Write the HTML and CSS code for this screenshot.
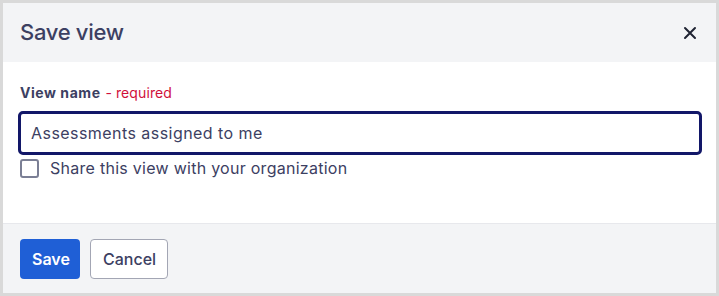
FILE: index.html
```html
<!DOCTYPE html>
<html>
<head>
<meta charset="utf-8">
<link rel="stylesheet" href="styles.css">
</head>
<body>
<div class="modal">
  <div class="modal-header">
    <h2 class="modal-title">Save view</h2>
    <button class="close-btn" aria-label="Close">
      <svg width="14" height="14" viewBox="0 0 14 14"><path d="M2 2 L12 12 M12 2 L2 12" stroke="#1f2333" stroke-width="2" stroke-linecap="round"/></svg>
    </button>
  </div>
  <div class="modal-body">
    <label class="field-label">View name <span class="required">- required</span></label>
    <input class="text-input" type="text" value="Assessments assigned to me">
    <label class="check-row"><span class="checkbox"></span><span>Share this view with your organization</span></label>
  </div>
  <div class="modal-footer">
    <button class="btn btn-primary">Save</button>
    <button class="btn btn-secondary">Cancel</button>
  </div>
</div>
</body>
</html>
```
FILE: styles.css
```css
* { box-sizing: border-box; }
html, body { margin: 0; padding: 0; }
body { font-family: Inter, "Noto Sans", sans-serif; color: #3c4062; background: #fff; }
.modal {
  width: 719px;
  height: 296px;
  border: 3px solid #d9d9d9;
  display: flex;
  flex-direction: column;
}
.modal-header {
  height: 59px;
  background: #f3f4f6;
  display: flex;
  align-items: center;
  justify-content: space-between;
  padding: 0 17px;
}
.modal-title {
  margin: 0;
  font-size: 22px;
  font-weight: 500;
  letter-spacing: -0.3px;
  line-height: 26px;
  color: #3c4062;
  padding-bottom: 1px;
}
.close-btn {
  border: 0;
  background: transparent;
  padding: 0;
  width: 14px;
  height: 14px;
  margin-right: 2px;
  display: flex;
}
.modal-body {
  flex: 1;
  background: #fff;
  padding: 21px 14px 0 15px;
  display: flex;
  flex-direction: column;
}
.field-label {
  font-size: 14px;
  font-weight: 700;
  letter-spacing: 0.55px;
  color: #3c4062;
  line-height: 20px;
  padding-left: 2px;
}
.required {
  font-weight: 400;
  font-size: 14px;
  letter-spacing: 0.1px;
  color: #d0103a;
  margin-left: 1px;
}
.text-input {
  margin-top: 8px;
  width: 684px;
  height: 44px;
  border: 3px solid #121768;
  border-radius: 5px;
  padding: 0 10px;
  font-family: Inter, "Noto Sans", sans-serif;
  font-size: 16px;
  letter-spacing: 0.45px;
  color: #3c4062;
  outline: none;
}
.check-row {
  display: flex;
  align-items: center;
  gap: 11px;
  margin-top: 3px;
  padding-left: 2px;
  font-size: 16px;
  letter-spacing: 0.27px;
  color: #3c4062;
  line-height: 20px;
}
.checkbox {
  width: 19px;
  height: 19px;
  border: 2px solid #7b7f95;
  border-radius: 3px;
  background: #fff;
}
.modal-footer {
  height: 70px;
  background: #f3f4f6;
  border-top: 1px solid #e7e8ec;
  display: flex;
  align-items: flex-start;
  gap: 10px;
  padding: 15px 17px 0;
}
.btn {
  height: 40px;
  border-radius: 4px;
  font-family: Inter, "Noto Sans", sans-serif;
  font-size: 16px;
  font-weight: 600;
  padding: 0 12px;
}
.btn-primary {
  width: 60px;
  background: #1f5fd6;
  color: #fff;
  border: 0;
}
.btn-secondary {
  width: 78px;
  background: #fff;
  color: #3c4062;
  border: 1px solid #a3a6b4;
  font-weight: 500;
}
```
